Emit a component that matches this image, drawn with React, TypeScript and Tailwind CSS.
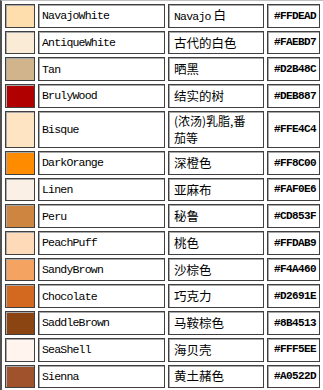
import React from "react";

type Row = { name: string; zh: React.ReactNode; hex: string; swatch: string; tall?: boolean };

const mono = "font-['Liberation_Mono',monospace] text-[11.5px] tracking-[-0.8px]";

const rows: Row[] = [
  { name: "NavajoWhite", zh: <><span className={mono}>Navajo</span> 白</>, hex: "#FFDEAD", swatch: "#FFDEAD" },
  { name: "AntiqueWhite", zh: "古代的白色", hex: "#FAEBD7", swatch: "#FAEBD7" },
  { name: "Tan", zh: "晒黑", hex: "#D2B48C", swatch: "#D2B48C" },
  { name: "BrulyWood", zh: "结实的树", hex: "#DEB887", swatch: "#B00000" },
  {
    name: "Bisque",
    zh: (
      <span className="flex flex-col text-[12px] leading-[17.5px]">
        <span>(浓汤)乳脂,番</span>
        <span>茄等</span>
      </span>
    ),
    hex: "#FFE4C4",
    swatch: "#FFE4C4",
    tall: true,
  },
  { name: "DarkOrange", zh: "深橙色", hex: "#FF8C00", swatch: "#FF8C00" },
  { name: "Linen", zh: "亚麻布", hex: "#FAF0E6", swatch: "#FAF0E6" },
  { name: "Peru", zh: "秘鲁", hex: "#CD853F", swatch: "#CD853F" },
  { name: "PeachPuff", zh: "桃色", hex: "#FFDAB9", swatch: "#FFDAB9" },
  { name: "SandyBrown", zh: "沙棕色", hex: "#F4A460", swatch: "#F4A460" },
  { name: "Chocolate", zh: "巧克力", hex: "#D2691E", swatch: "#D2691E" },
  { name: "SaddleBrown", zh: "马鞍棕色", hex: "#8B4513", swatch: "#8B4513" },
  { name: "SeaShell", zh: "海贝壳", hex: "#FFF5EE", swatch: "#FFF5EE" },
  { name: "Sienna", zh: "黄土赭色", hex: "#A0522D", swatch: "#A0522D" },
];

// Cell frame: dark outline with a softer grey line along the inner top/left
const cell =
  "border border-[#404040] shadow-[inset_1px_1px_0_#a8a8a8] flex items-center";

export default function App() {
  return (
    <div className="w-[323px] h-[390px] overflow-hidden bg-white">
      <div className="w-[323px] border-t border-l-2 border-t-[#c0c0c0] border-l-[#505050] pt-[3px] pl-[3px] pb-[3px] bg-white">
        <div className="grid grid-cols-[30px_127px_96px_53px] gap-[3px]">
          {rows.map((r) => {
            const h = r.tall ? "h-[37.3px]" : "h-[23.7px]";
            return (
              <React.Fragment key={r.name}>
                <div className={`${cell} ${h}`} style={{ backgroundColor: r.swatch }} />
                <div className={`${cell} ${h} bg-white pl-[3px] ${mono} text-black`}>
                  {r.name}
                </div>
                <div className={`${cell} ${h} bg-white pl-[5px] font-['Noto_Sans_CJK_SC',sans-serif] text-[12.5px] leading-[14px] text-black`}>
                  <span>{r.zh}</span>
                </div>
                <div className={`${cell} ${h} bg-white pl-[6px] font-['Liberation_Mono',monospace] font-bold text-[11px] tracking-[-0.6px] text-black`}>
                  {r.hex}
                </div>
              </React.Fragment>
            );
          })}
        </div>
      </div>
    </div>
  );
}
